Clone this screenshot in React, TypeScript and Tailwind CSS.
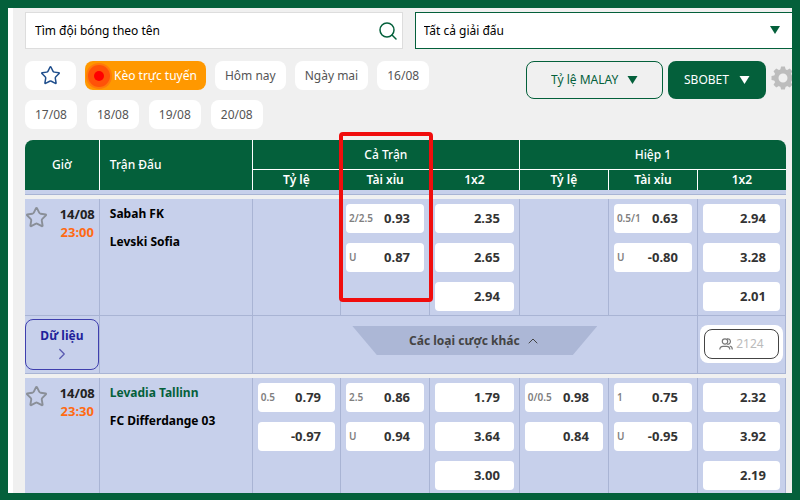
import { useState } from "react";
import { ChevronRight, ChevronUp, Star } from "lucide-react";

type Odd = { line?: string; value: string };

type Match = {
  date: string;
  time: string;
  home: string;
  away: string;
  favorite: "home" | "none";
  viewers?: number;
  odds: Odd[][];
};

const DAYS_FIRST = ["Hôm nay", "Ngày mai", "16/08"];
const DAYS_NEXT = ["17/08", "18/08", "19/08", "20/08"];
const COLUMNS = ["Tỷ lệ", "Tài xỉu", "1x2"];
const TEETH = [0, 45, 90, 135, 180, 225, 270, 315];

const MATCHES: Match[] = [
  {
    date: "14/08",
    time: "23:00",
    home: "Sabah FK",
    away: "Levski Sofia",
    favorite: "none",
    viewers: 2124,
    odds: [
      [],
      [{ line: "2/2.5", value: "0.93" }, { line: "U", value: "0.87" }],
      [{ value: "2.35" }, { value: "2.65" }, { value: "2.94" }],
      [],
      [{ line: "0.5/1", value: "0.63" }, { line: "U", value: "-0.80" }],
      [{ value: "2.94" }, { value: "3.28" }, { value: "2.01" }],
    ],
  },
  {
    date: "14/08",
    time: "23:30",
    home: "Levadia Tallinn",
    away: "FC Differdange 03",
    favorite: "home",
    odds: [
      [{ line: "0.5", value: "0.79" }, { value: "-0.97" }],
      [{ line: "2.5", value: "0.86" }, { line: "U", value: "0.94" }],
      [{ value: "1.79" }, { value: "3.64" }, { value: "3.00" }],
      [{ line: "0/0.5", value: "0.98" }, { value: "0.84" }],
      [{ line: "1", value: "0.75" }, { line: "U", value: "-0.95" }],
      [{ value: "2.32" }, { value: "3.92" }, { value: "2.19" }],
    ],
  },
];

const Caret = ({ className }: { className: string }) => (
  <svg viewBox="0 0 10 8" className={className} fill="currentColor" aria-hidden="true">
    <path d="M0 0h10L5 8z" />
  </svg>
);

const SearchIcon = () => (
  <svg viewBox="0 0 18 18" className="h-[18px] w-[18px]" fill="none" stroke="currentColor" strokeWidth="1.5" aria-hidden="true">
    <circle cx="8" cy="8" r="7" />
    <path d="M13 13l4 4" strokeLinecap="round" />
  </svg>
);

const GearIcon = () => (
  <svg viewBox="0 0 24 24" className="h-6 w-6" aria-hidden="true">
    <circle cx="12" cy="12" r="6.8" fill="none" stroke="currentColor" strokeWidth="4.6" />
    {TEETH.map((angle) => (
      <path key={angle} d="M9.2 4l.9-3.5h3.8l.9 3.500z" fill="currentColor" transform={`rotate(${angle} 12 12)`} />
    ))}
  </svg>
);

const UsersIcon = () => (
  <svg viewBox="0 0 14 12" className="h-3 w-[14px]" fill="none" stroke="currentColor" strokeWidth="1.2" aria-hidden="true">
    <circle cx="6" cy="3.5" r="2.7" />
    <path d="M8 .9a2.700 2.700 0 1 1 0 5.200" />
    <path d="M.8 11.500q0-3.200 3.200-3.200h3.600q3.200 0 3.200 3.200M10.800 8q2.500.4 2.500 3.500" />
  </svg>
);

const DayButton = ({ label }: { label: string }) => (
  <button type="button" className="h-[29px] rounded-lg bg-white px-[10px] text-[#555]">
    {label}
  </button>
);

const OddButton = ({ line, value }: Odd) => (
  <button
    type="button"
    className="flex h-[29px] w-full items-center justify-between rounded bg-white pr-[14px] pl-[3px]"
  >
    <span className="text-[10px] font-semibold text-[#808080]">{line}</span>
    <span className="text-[13px] font-bold text-[#333]">{value}</span>
  </button>
);

const Spacer = () => (
  <tr>
    <td colSpan={8} className="h-1 bg-[#f0f0f0] p-0"></td>
  </tr>
);

const MatchRows = ({ match }: { match: Match }) => (
  <>
    <tr className="bg-[#c7d0eb] align-top">
      <td className="h-[116px] p-0">
        <div className="flex justify-between pt-[6px] pr-1">
          <button type="button" aria-label="Yêu thích" className="h-6 text-[#8a8f98]">
            <Star size={23} strokeWidth={2} strokeLinejoin="miter" />
          </button>
          <div className="text-center text-[13px] font-bold leading-[18px]">
            <p className="text-[#222]">{match.date}</p>
            <p className="text-[#ff6a13]">{match.time}</p>
          </div>
        </div>
      </td>
      <td className="border-l border-[#a9b4d4] px-[10px] pt-[6px] font-bold leading-[18px]">
        <p className={match.favorite === "home" ? "text-[#04603b]" : "text-black"}>{match.home}</p>
        <p className="mt-[10px] text-black">{match.away}</p>
      </td>
      {match.odds.map((column, i) => (
        <td key={i} className="border-l border-[#a9b4d4] px-[5px] pt-[5px] pb-1 last:border-r">
          <div className="flex flex-col gap-[10px]">
            {column.map((odd, j) => (
              <OddButton key={j} {...odd} />
            ))}
          </div>
        </td>
      ))}
    </tr>
    {match.viewers && (
      <>
        <tr className="bg-[#c7d0eb]">
          <td className="h-[59px] border-y border-[#a9b4d4] p-0">
            <button
              type="button"
              className="flex h-[51px] w-full flex-col items-center justify-center rounded-lg border border-[#3f3fae] font-bold leading-[18px] text-[#20209a]"
            >
              Dữ liệu
              <ChevronRight size={18} strokeWidth={1.7} className="text-[#5a5ab0]" />
            </button>
          </td>
          <td className="border-y border-l border-[#a9b4d4] p-0"></td>
          <td colSpan={5} className="border-y border-l border-[#a9b4d4] p-0">
            <button
              type="button"
              className="mx-auto mb-2 flex h-[29px] w-[245px] items-center justify-center gap-[5px] bg-[#acb7d6] font-bold text-[#444] [clip-path:polygon(0_0,100%_0,90%_100%,10%_100%)]"
            >
              Các loại cược khác
              <ChevronUp size={16} strokeWidth={1.5} />
            </button>
          </td>
          <td className="border-x border-y border-[#a9b4d4] p-0">
            <div className="mx-[2px] mb-[2px] rounded-lg bg-white p-1">
              <button
                type="button"
                className="flex h-[30px] w-full items-center justify-center gap-[3px] rounded-lg border border-[#444] text-[#bbb]"
              >
                <span className="text-[#777]">
                  <UsersIcon />
                </span>
                {match.viewers}
              </button>
            </div>
          </td>
        </tr>
        <Spacer />
      </>
    )}
  </>
);

const App = () => {
  const [query, setQuery] = useState("");

  return (
    <div className="h-screen overflow-hidden border-8 border-b-[7px] border-[#04603b] bg-white pl-[5px] font-['Noto_Sans',sans-serif] text-[12px]">
      <main className="h-full overflow-hidden bg-[#f0f0f0] pt-1 pl-3">
        <div className="grid grid-cols-2 gap-3">
          <label className="flex h-[37px] items-center border border-[#ddd] bg-white pr-[5px] pl-[9px] text-[#04603b]">
            <input
              type="text"
              value={query}
              onChange={(e) => setQuery(e.target.value)}
              placeholder="Tìm đội bóng theo tên"
              aria-label="Tìm đội bóng theo tên"
              className="min-w-0 flex-1 text-black outline-none placeholder:text-black"
            />
            <SearchIcon />
          </label>
          <div className="relative">
            <select
              aria-label="Giải đấu"
              className="h-[37px] w-full appearance-none border border-r-0 border-[#04603b] bg-white px-2 text-black"
            >
              <option>Tất cả giải đấu</option>
            </select>
            <Caret className="pointer-events-none absolute top-[14px] right-3 h-2 w-[10px] text-[#04603b]" />
          </div>
        </div>

        <div className="mt-3 flex justify-between">
          <div className="flex flex-col gap-[10px]">
            <div className="flex gap-[9px]">
              <button
                type="button"
                aria-label="Yêu thích"
                className="flex h-[29px] w-[51px] items-center justify-center rounded-lg bg-white text-[#1f4e8c]"
              >
                <Star size={21} strokeWidth={1.7} />
              </button>
              <button
                type="button"
                className="flex h-[29px] items-center gap-[2px] rounded-lg bg-[#ff9800] pr-[9px] pl-px text-white"
              >
                <svg viewBox="0 0 26 26" className="h-[26px] w-[26px]" aria-hidden="true">
                  <circle cx="13" cy="13" r="13" fill="#ff7a0a" />
                  <circle cx="13" cy="13" r="11" fill="#ff5208" />
                  <circle cx="13" cy="13" r="5" fill="#f00" />
                </svg>
                Kèo trực tuyến
              </button>
              {DAYS_FIRST.map((day) => (
                <DayButton key={day} label={day} />
              ))}
            </div>
            <div className="flex gap-[10px]">
              {DAYS_NEXT.map((day) => (
                <DayButton key={day} label={day} />
              ))}
            </div>
          </div>

          <div className="flex items-start gap-[5px]">
            <div className="relative">
              <select
                aria-label="Tỷ lệ"
                className="h-[38px] w-[137px] appearance-none rounded-lg border border-[#04603b] pl-6 text-[#04603b]"
              >
                <option>Tỷ lệ MALAY</option>
              </select>
              <Caret className="pointer-events-none absolute top-[15px] right-[25px] h-2 w-[11px] text-[#04603b]" />
            </div>
            <div className="relative">
              <select
                aria-label="Nhà cái"
                className="h-[38px] w-[98px] appearance-none rounded-lg bg-[#04603b] pl-4 text-white"
              >
                <option>SBOBET</option>
              </select>
              <Caret className="pointer-events-none absolute top-[15px] right-4 h-2 w-[11px] text-white" />
            </div>
            <button type="button" aria-label="Cài đặt" className="mt-[5px] -mr-[3px] text-[#bdbdbd]">
              <GearIcon />
            </button>
          </div>
        </div>

        <div className="mt-[11px] pr-[6px]">
          <table className="w-full table-fixed border-separate border-spacing-0">
            <colgroup>
              <col className="w-[9.7%]" />
              <col className="w-[20.1%]" />
              <col className="w-[11.6%]" />
              <col className="w-[11.7%]" />
              <col className="w-[11.8%]" />
              <col className="w-[11.7%]" />
              <col className="w-[11.7%]" />
              <col className="w-[11.7%]" />
            </colgroup>
            <thead className="text-white">
              <tr>
                <th rowSpan={2} className="rounded-tl-lg bg-[#04603b] p-0 font-medium">
                  Giờ
                </th>
                <th rowSpan={2} className="border-l border-white bg-[#04603b] px-[10px] py-0 text-left font-medium">
                  Trận Đấu
                </th>
                <th colSpan={3} className="h-[30px] border-b border-l border-white bg-[#04603b] p-0 font-medium">
                  Cả Trận
                </th>
                <th colSpan={3} className="rounded-tr-lg border-b border-l border-white bg-[#04603b] p-0 font-medium">
                  Hiệp 1
                </th>
              </tr>
              <tr>
                {[...COLUMNS, ...COLUMNS].map((name, i) => (
                  <th key={i} className="relative h-5 border-l border-white bg-[#04603b] p-0 font-semibold">
                    {name}
                    {i === 1 && (
                      <span className="pointer-events-none absolute -top-[38px] -right-1 -left-[2px] z-10 h-[170px] rounded border-4 border-[#f00d0d]"></span>
                    )}
                  </th>
                ))}
              </tr>
            </thead>
            <tbody>
              <tr>
                <td colSpan={8} className="h-[5px] border-b border-[#a9b4d4] bg-[#c7d0eb] p-0"></td>
              </tr>
              <Spacer />
              {MATCHES.map((match) => (
                <MatchRows key={match.time} match={match} />
              ))}
            </tbody>
          </table>
        </div>
      </main>
    </div>
  );
};

export default App;
